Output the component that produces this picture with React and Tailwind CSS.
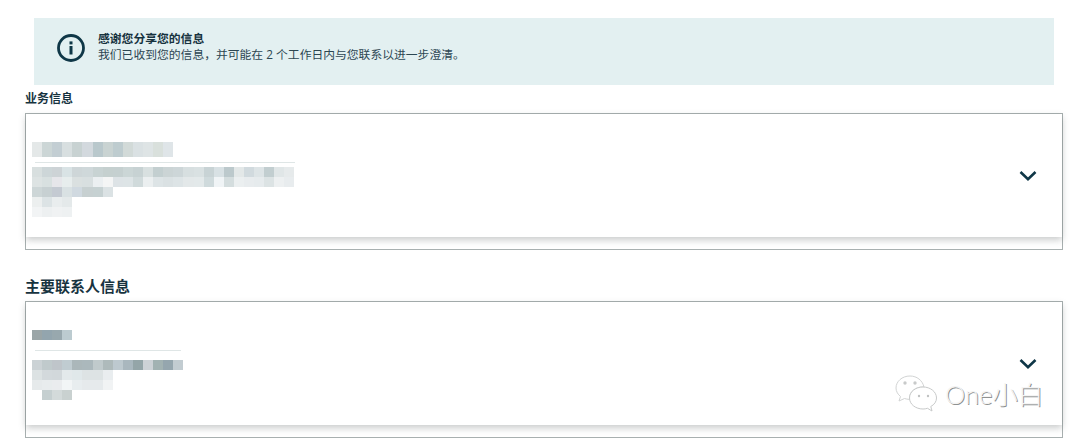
const F1 = [
  { h: 15, c: ["#e4e8e8","#ccd6d6","#c3ced3","#d8dfe0","#c8d2d2","#d3d9de","#b9c8cc","#c9d3d2","#becccf","#d2dad8","#dae1e3","#dee4e5","#d9e0dc","#dfe5e8"] },
  { h: 10, c: ["#d8dfdf","#cdd6d8","#cdd3d6","#d9e3e5","#ced6d8","#cfd8da","#c8d3d3","#c5d0cf","#c5d0d0","#cbd6d6","#c7d2d3","#d8e0e0","#c3cfd0","#cbd4d5","#cdd6d8","#d7dfe0","#d9e1e2","#c8d3d5","#d8e1e4","#bcc9cc","#e3e8e8","#d1dade","#dde4e6","#c2ced0","#e0e6e7","#e6eaeb"] },
  { h: 10, c: ["#dde3e3","#d8e0e0","#e6e6ea","#e7eded","#dae0e0","#d8dfe0","#ebeff1","#f4f5f5","#dde3e6","#dde4e6","#d0dadb","#ebeff0","#dde4e6","#dae1e3","#dde4e6","#e3e8e9","#e3e9ea","#cfdadc","#f0f4f6","#d4ddde","#ebeff0","#e8ecee","#e6ebed","#dce3e4","#edf0f1","#e8ecee"] },
  { h: 10, c: ["#cdd6d7","#c7d0d2","#c4cad2","#d9e1e3","#d0d9e0","#c7d0d1","#c6d1d2","#dbe2e4"] },
  { h: 10, c: ["#ecefef","#dce3e5","#e9edee","#e4e9ea"] },
  { h: 10, c: ["#f2f4f5","#edf0f1","#f0f2f3","#eef1f2"] },
];
const F2 = [
  { h: 10, c: ["#9aa5a7","#93a5ae","#98a8ae","#bccbd0"] },
  { h: 10, c: ["#cbd2d5","#c0cacc","#bfc5ca","#c0ccd1","#abb7ba","#abb8bc","#c0cacc","#aebabb","#bdc9cf","#a9b7be","#94a5a8","#cdd2d6","#a2b2b2","#95a6ae","#c2ccd1"] },
  { h: 10, c: ["#dce2e3","#d3d9dc","#d2d8db","#e3e9eb","#e0e8ea","#dde3e4","#dde3e4","#e9edef"] },
  { h: 10, c: ["#e6eaeb","#e8eced","#eaecee","#f2f5f6","#e8edef","#e6eaec","#e6eaec","#f1f3f4"] },
  { h: 10, c: ["#ffffff","#c5cfd0","#d3dada","#c9d1d0"] },
];

function Row({ row }) {
  return (
    <div className="flex" style={{ height: row.h }}>
      {row.c.map((c, i) => (
        <div key={i} className="w-[10.1px] h-full" style={{ background: c }} />
      ))}
    </div>
  );
}

function Chevron() {
  return (
    <svg width="18" height="12" viewBox="0 0 18 12" fill="none" className="shrink-0 mt-[1px]">
      <path d="M1.5 2 L9 9.2 L16.5 2" stroke="#0f3747" strokeWidth="2.6" />
    </svg>
  );
}

function Card({ children }) {
  return (
    <div className="h-[137px] mr-[17px] ml-[25px] border border-[#a8b0b0] bg-white">
      <div className="h-[123px] bg-white flex items-center justify-between pr-[25px] shadow-[0_3px_7px_rgba(60,70,70,0.28)]">
        <div className="h-full flex flex-col">{children}</div>
        <Chevron />
      </div>
    </div>
  );
}

export default function App() {
  return (
    <div className="relative w-[1080px] h-[443px] overflow-hidden bg-white text-[#17333f] font-['Open_Sans','Noto_Sans_CJK_SC',sans-serif]">
      <div className="pt-[18px]">
        <div className="ml-[34px] w-[1020px] h-[67px] bg-[#e3f0f1] flex items-center pl-[23px] gap-[13px]">
          <svg width="28" height="28" viewBox="0 0 28 28" fill="none" className="shrink-0 -mt-[8px]">
            <circle cx="14" cy="14" r="12.5" stroke="#0f3747" strokeWidth="2.8" />
            <rect x="12.5" y="12" width="3" height="8.5" fill="#0f3747" />
            <rect x="12.5" y="7.4" width="3" height="3" fill="#0f3747" />
          </svg>
          <div className="-mt-[11px] text-[11.8px] leading-[16px]">
            <div className="font-bold">感谢您分享您的信息</div>
            <div className="text-[#2c4651]">我们已收到您的信息，并可能在 2 个工作日内与您联系以进一步澄清。</div>
          </div>
        </div>
        <div className="ml-[25px] mt-[5px] h-[17px] text-[12px] leading-[17px] font-bold">业务信息</div>
        <div className="mt-[6px]">
          <Card>
            <div className="pl-[6px] pt-[28px]">
              <Row row={F1[0]} />
              <div className="ml-[3px] mt-[5px] mb-[4px] w-[260px] h-px bg-[#dfe6e6]" />
              {F1.slice(1).map((r, i) => <Row key={i} row={r} />)}
            </div>
          </Card>
        </div>
        <h2 className="ml-[25px] mt-[26px] h-[21px] text-[15px] leading-[21px] font-bold">主要联系人信息</h2>
        <div className="mt-[4px]">
          <Card>
            <div className="pl-[6px] pt-[28px]">
              <Row row={F2[0]} />
              <div className="ml-[3px] mt-[10px] mb-[9px] w-[146px] h-px bg-[#dfe6e6]" />
              {F2.slice(1).map((r, i) => <Row key={i} row={r} />)}
            </div>
          </Card>
        </div>
      </div>

      <div className="absolute left-[895px] top-[375px] flex items-center gap-[8px]">
        <svg width="42" height="37" viewBox="0 0 42 37" fill="none">
          <path d="M15 1C7 1 1 6.500 1 13c0 3.500 2 6.500 4.500 8.500L4 26l5.500-2.500c1.500.5 3 .8 5 .9C14 17 20 11.500 29 12 27.500 5.500 22 1 15 1Z" fill="#fff" stroke="#d2d4d4" strokeWidth="1" />
          <path d="M28 12c-7.500 0-13.500 4.800-13.500 11S20.500 34 28 34c1.500 0 3-.2 4.500-.7L37 36l-1.200-4.500C39.500 29.500 41.500 26.500 41.500 23 41.500 16.800 35.500 12 28 12Z" fill="#fff" stroke="#c8caca" strokeWidth="1" />
          <circle cx="10" cy="8" r="1.700" fill="#c8caca" />
          <circle cx="20" cy="8" r="1.700" fill="#c8caca" />
          <circle cx="24" cy="21" r="1.200" fill="#c0c2c2" />
          <circle cx="33" cy="21" r="1.200" fill="#c0c2c2" />
        </svg>
        <span className="text-[25.5px] leading-[30px] font-light text-[#f4f4f4] font-['Lato','Noto_Sans_CJK_SC',sans-serif] [text-shadow:1px_1px_0_#8f9292]">One小白</span>
      </div>
    </div>
  );
}
